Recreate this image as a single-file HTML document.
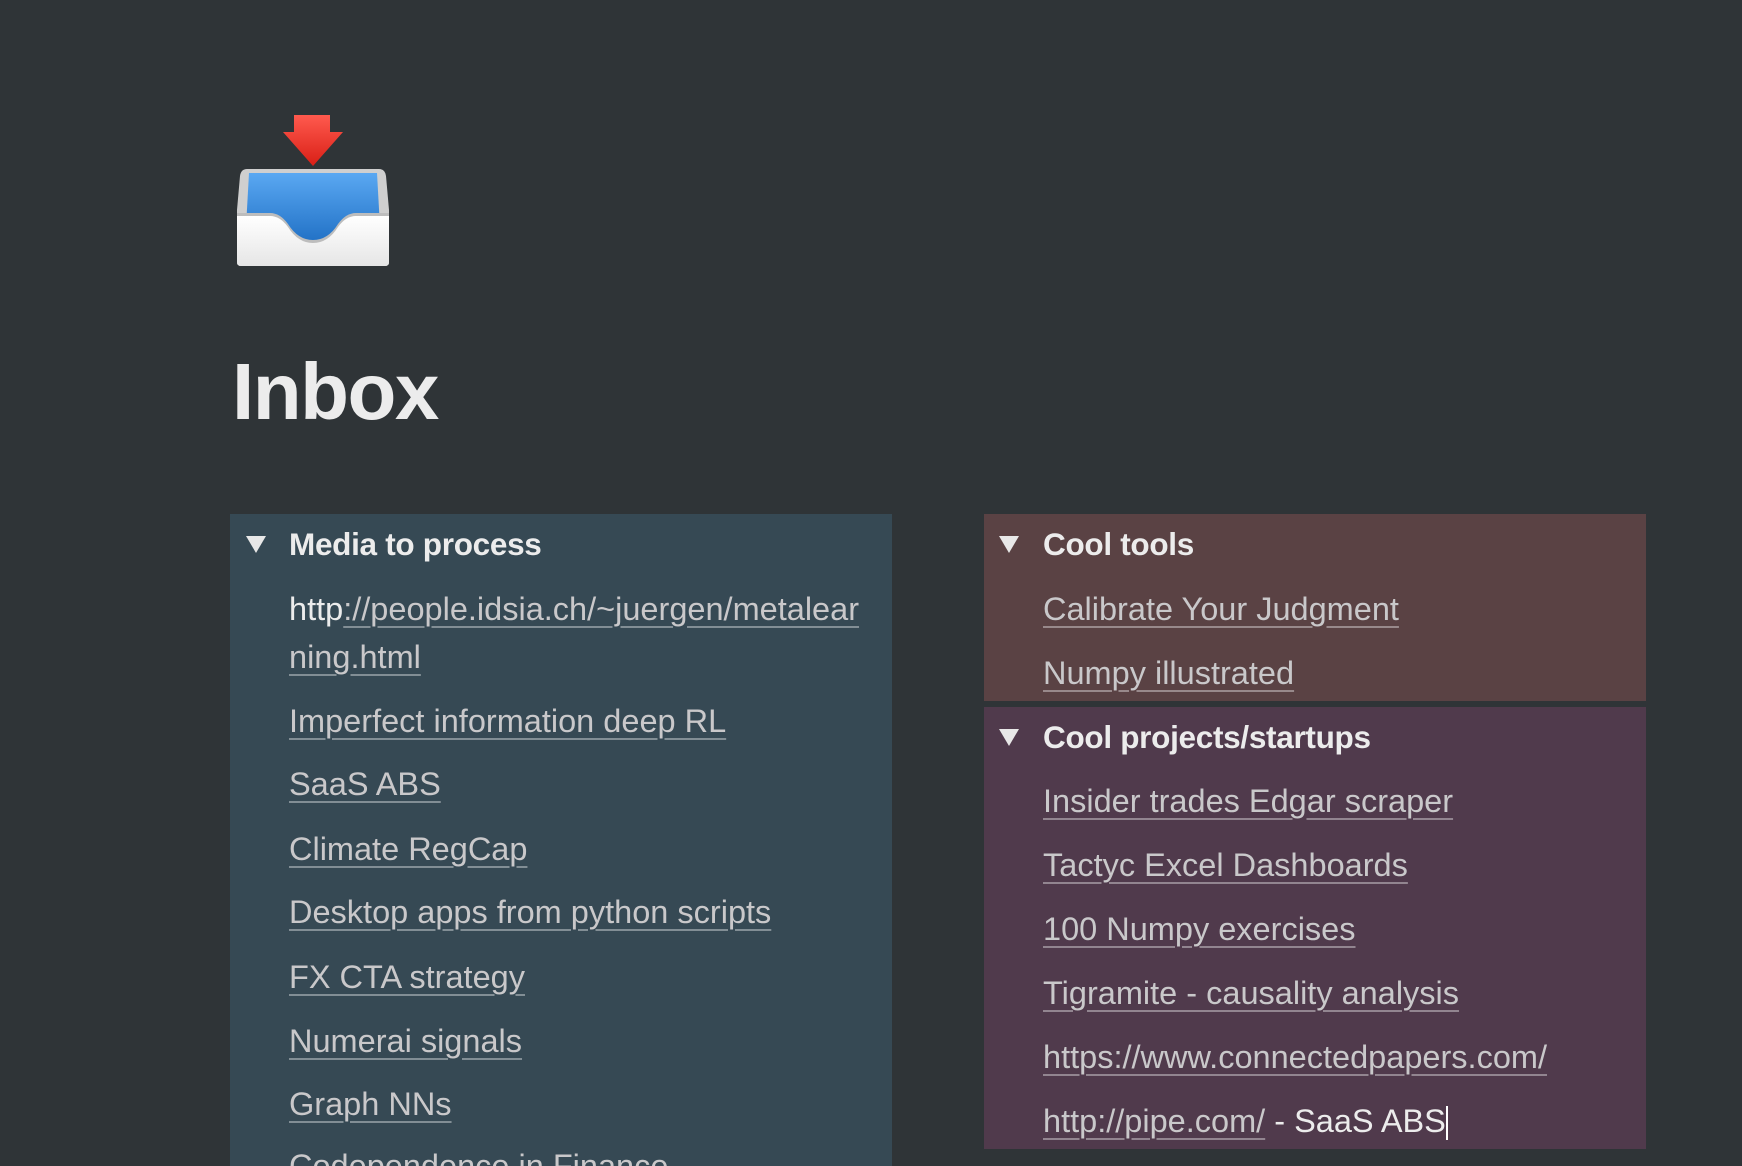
<!DOCTYPE html>
<html><head><meta charset="utf-8"><style>
html,body{margin:0;padding:0;width:1742px;height:1166px;overflow:hidden;background:#2f3437;}
#wrap{width:1742px;height:1166px;position:relative;overflow:hidden;font-family:"Liberation Sans",sans-serif;}
.p{position:absolute;}
.t{position:absolute;line-height:48px;height:48px;white-space:nowrap;font-size:32.5px;color:#c9c8ca;letter-spacing:0px;}
.t a{color:inherit;text-decoration:underline;text-decoration-color:rgba(255,255,255,0.38);text-decoration-thickness:2px;text-underline-offset:6px;}
.h{font-weight:bold;color:#ececec;font-size:31.5px;letter-spacing:-0.3px;}
.tri{position:absolute;width:0;height:0;border-left:10px solid transparent;border-right:10px solid transparent;border-top:17px solid #e8e8e8;}
.w{color:#ececec;}
</style></head><body><div id="wrap">
<svg class="p" style="left:0;top:0" width="1742" height="300" viewBox="0 0 1742 300">
<defs>
<linearGradient id="ar" x1="0" y1="0" x2="0" y2="1"><stop offset="0" stop-color="#ff5a4e"/><stop offset="1" stop-color="#d91f16"/></linearGradient>
<linearGradient id="bl" x1="0" y1="0" x2="0" y2="1"><stop offset="0" stop-color="#5aa8f2"/><stop offset="1" stop-color="#1f6fc4"/></linearGradient>
<linearGradient id="wh" x1="0" y1="0" x2="0" y2="1"><stop offset="0" stop-color="#ffffff"/><stop offset="1" stop-color="#e6e6e6"/></linearGradient>
</defs>
<path d="M294 115 H330 V132 H343 L313 166 L283 132 H294 Z" fill="url(#ar)"/>
<path d="M247 169 H379 Q385 169 386 176 L389 210 V262 Q389 266 385 266 H241 Q237 266 237 262 V210 L240 176 Q241 169 247 169 Z" fill="#cfcfcf"/>
<path d="M249 173 H377 L381 245 H245 Z" fill="url(#bl)"/>
<path d="M237 213 H270 Q280 213 288 224 Q298 240 313 240 Q328 240 338 224 Q346 213 356 213 H389 V262 Q389 266 385 266 H241 Q237 266 237 262 Z" fill="#bdbdbd"/>
<path d="M237 216 H270 Q280 216 288 227 Q298 243 313 243 Q328 243 338 227 Q346 216 356 216 H389 V262 Q389 266 385 266 H241 Q237 266 237 262 Z" fill="url(#wh)"/>
</svg>
<div class="p" style="left:232px;top:344px;font-size:80px;font-weight:bold;color:#ececec;letter-spacing:-1.5px;line-height:96px;">Inbox</div>

<div class="p" style="left:230px;top:514px;width:662px;height:652px;background:#364954;"></div>
<div class="p" style="left:984px;top:514px;width:662px;height:187px;background:#5a4244;"></div>
<div class="p" style="left:984px;top:707px;width:662px;height:442px;background:#503a4c;"></div>

<div class="tri" style="left:246px;top:536px"></div>
<div class="t h" style="left:289px;top:520px">Media to process</div>
<div class="t" style="left:289px;top:585px"><span class="w">http</span><a>://people.idsia.ch/~juergen/metalear</a></div>
<div class="t" style="left:289px;top:633px"><a>ning.html</a></div>
<div class="t" style="left:289px;top:697px"><a>Imperfect information deep RL</a></div>
<div class="t" style="left:289px;top:760px"><a>SaaS ABS</a></div>
<div class="t" style="left:289px;top:825px"><a>Climate RegCap</a></div>
<div class="t" style="left:289px;top:888px"><a>Desktop apps from python scripts</a></div>
<div class="t" style="left:289px;top:953px"><a>FX CTA strategy</a></div>
<div class="t" style="left:289px;top:1017px"><a>Numerai signals</a></div>
<div class="t" style="left:289px;top:1080px"><a>Graph NNs</a></div>
<div class="t" style="left:289px;top:1142px"><a>Codependence in Finance</a></div>

<div class="tri" style="left:999px;top:536px"></div>
<div class="t h" style="left:1043px;top:520px">Cool tools</div>
<div class="t" style="left:1043px;top:585px"><a>Calibrate Your Judgment</a></div>
<div class="t" style="left:1043px;top:649px"><a>Numpy illustrated</a></div>

<div class="tri" style="left:999px;top:729px"></div>
<div class="t h" style="left:1043px;top:713px">Cool projects/startups</div>
<div class="t" style="left:1043px;top:777px"><a>Insider trades Edgar scraper</a></div>
<div class="t" style="left:1043px;top:841px"><a>Tactyc Excel Dashboards</a></div>
<div class="t" style="left:1043px;top:905px"><a>100 Numpy exercises</a></div>
<div class="t" style="left:1043px;top:969px"><a>Tigramite - causality analysis</a></div>
<div class="t" style="left:1043px;top:1033px"><a>https://www.connectedpapers.com/</a></div>
<div class="t" style="left:1043px;top:1097px"><a>http://pipe.com/</a><span class="w"> - SaaS ABS</span><span style="display:inline-block;width:2px;height:34px;background:#fff;vertical-align:middle;"></span></div>
</div></body></html>
